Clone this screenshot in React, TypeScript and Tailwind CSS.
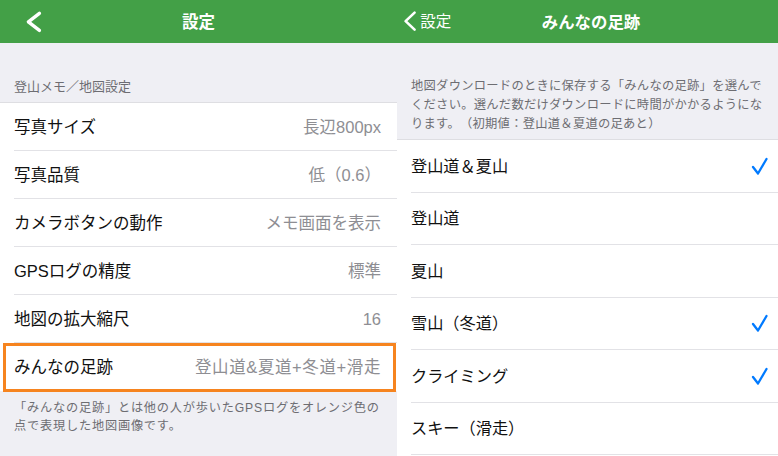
import React from "react";

const FONT = '"Liberation Sans", "Noto Sans CJK JP", sans-serif';

function Chevron({ w, h, sw }: { w: number; h: number; sw: number }) {
  return (
    <svg width={w + sw * 2} height={h + sw * 2} viewBox={`0 0 ${w + sw * 2} ${h + sw * 2}`} fill="none">
      <polyline
        points={`${w + sw},${sw} ${sw},${h / 2 + sw} ${w + sw},${h + sw}`}
        stroke="white"
        strokeWidth={sw}
        strokeLinecap="round"
        strokeLinejoin="round"
      />
    </svg>
  );
}

function Check() {
  return (
    <svg width="17" height="18" viewBox="0 0 17 18" fill="none">
      <polyline points="2,10 7,16.5 15.5,2" stroke="#007aff" strokeWidth="2.3" strokeLinecap="round" strokeLinejoin="round" />
    </svg>
  );
}

const leftRows: [string, string][] = [
  ["写真サイズ", "長辺800px"],
  ["写真品質", "低（0.6）"],
  ["カメラボタンの動作", "メモ画面を表示"],
  ["GPSログの精度", "標準"],
  ["地図の拡大縮尺", "16"],
];

const rightRows: [string, boolean][] = [
  ["登山道＆夏山", true],
  ["登山道", false],
  ["夏山", false],
  ["雪山（冬道）", true],
  ["クライミング", true],
  ["スキー（滑走）", false],
];

function LeftScreen() {
  return (
    <div className="w-[397px] shrink-0 h-full bg-[#efeff4] flex flex-col">
      <div className="h-[43px] bg-[#43a047] grid grid-cols-[1fr_auto_1fr] items-center">
        <div className="pl-[25px] flex items-center">
          <Chevron w={11} h={17} sw={3.4} />
        </div>
        <div className="text-white font-bold text-[16.5px] leading-[20px]">設定</div>
        <div />
      </div>
      <div className="h-[59px] flex items-end pb-[7px] px-[14px] text-[13px] leading-[16px] text-[#6d6d72]">
        登山メモ／地図設定
      </div>
      <div className="bg-white border-t border-[#dedee2]">
        {leftRows.map(([label, value]) => (
          <div key={label} className="h-[48px] pl-[14px]">
            <div className="h-full border-b border-[#e2e2e6] flex items-center justify-between pr-[16px] text-[16.5px] leading-[20px]">
              <span className="text-[#111]">{label}</span>
              <span className="text-[#8e8e93]">{value}</span>
            </div>
          </div>
        ))}
        <div className="h-[48px] pl-[14px] relative">
          <div className="h-full flex items-center justify-between pr-[16px] text-[16.5px] leading-[20px]">
            <span className="text-[#111]">みんなの足跡</span>
            <span className="text-[#8e8e93] tracking-[0.6px]">登山道&amp;夏道+冬道+滑走</span>
          </div>
          <div className="absolute left-[3px] right-[1px] top-0 bottom-[-1px] border-[3px] border-[#f6841f]" />
        </div>
      </div>
      <div className="pt-[8px] px-[14px] text-[12.2px] tracking-[0.8px] leading-[18px] text-[#6d6d72]">
        <div className="whitespace-nowrap">「みんなの足跡」とは他の人が歩いたGPSログをオレンジ色の</div>
        <div className="whitespace-nowrap">点で表現した地図画像です。</div>
      </div>
    </div>
  );
}

function RightScreen() {
  return (
    <div className="w-[388px] shrink-0 h-full bg-[#efeff4] flex flex-col">
      <div className="h-[43px] bg-[#43a047] grid grid-cols-[1fr_auto_1fr] items-center">
        <div className="pl-[6px] flex items-center gap-[3px] text-white text-[15.5px] leading-[20px]">
          <Chevron w={9} h={17} sw={2.6} />
          <span>設定</span>
        </div>
        <div className="text-white font-bold text-[16.4px] leading-[20px]">みんなの足跡</div>
        <div />
      </div>
      <div className="h-[96px] flex flex-col justify-end pb-[5px] px-[14px] text-[12.3px] tracking-[0.25px] leading-[19px] text-[#6d6d72]">
        <div className="whitespace-nowrap">地図ダウンロードのときに保存する「みんなの足跡」を選んで</div>
        <div className="whitespace-nowrap">ください。選んだ数だけダウンロードに時間がかかるようにな</div>
        <div className="whitespace-nowrap">ります。（初期値：登山道＆夏道の足あと）</div>
      </div>
      <div className="bg-white border-t border-[#dedee2] flex-1">
        {rightRows.map(([label, checked]) => (
          <div key={label} className="h-[52.5px] pl-[14px]">
            <div className="h-full border-b border-[#e2e2e6] flex items-center justify-between pr-[17px] text-[16.2px] leading-[20px]">
              <span className="text-[#111]">{label}</span>
              {checked ? <Check /> : null}
            </div>
          </div>
        ))}
      </div>
    </div>
  );
}

export default function App() {
  return (
    <div
      className="w-[778px] h-[456px] overflow-hidden flex bg-white [text-spacing-trim:space-all]"
      style={{ fontFamily: FONT }}
    >
      <LeftScreen />
      <RightScreen />
    </div>
  );
}
